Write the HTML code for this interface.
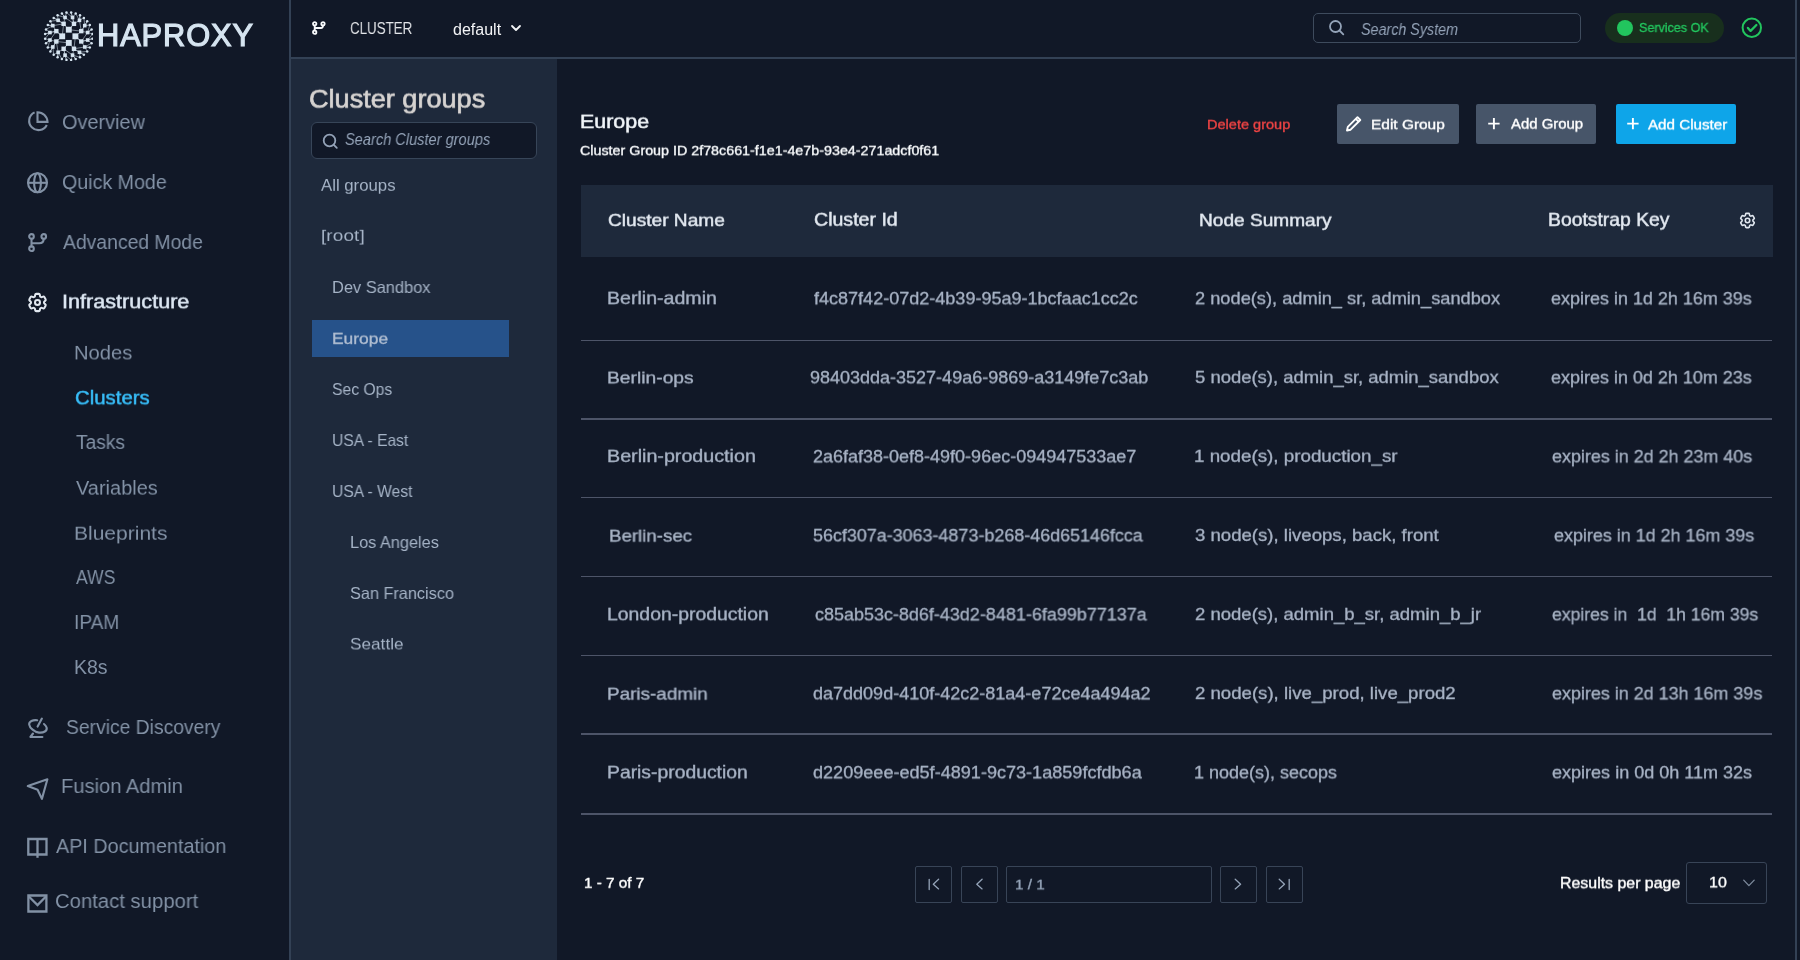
<!DOCTYPE html>
<html><head><meta charset="utf-8"><title>HAProxy Fusion - Clusters</title>
<style>
html,body{margin:0;padding:0;width:1800px;height:960px;overflow:hidden;background:#111827}
body{position:relative;font-family:"Liberation Sans",sans-serif}
.t{position:absolute;white-space:nowrap;line-height:1;will-change:transform;transform-origin:0 0}
.r{position:absolute;display:block}
</style></head><body>
<div class="r" style="left:0px;top:0px;width:1800px;height:960px;background:#111827"></div>
<div class="r" style="left:289px;top:0px;width:2px;height:960px;background:#334155"></div>
<div class="r" style="left:291px;top:57px;width:1504px;height:2px;background:#334155"></div>
<div class="r" style="left:1795px;top:0px;width:2px;height:960px;background:#334155"></div>
<div class="r" style="left:291px;top:59px;width:266px;height:901px;background:#1e293b"></div>
<svg class="r" style="left:43px;top:11px;" width="50" height="50" viewBox="0 0 50 50"><path d="M28.13 1.61L29.55 6.47M28.13 1.61L29.55 6.47M32.71 2.52L29.55 6.47M32.71 2.52L36.47 9.34M37.02 4.31L36.47 9.34M37.02 4.31L36.47 9.34M40.90 6.90L36.47 9.34M40.90 6.90L41.76 14.63M44.20 10.20L41.76 14.63M44.20 10.20L41.76 14.63M46.79 14.08L41.76 14.63M46.79 14.08L44.63 21.55M48.58 18.39L44.63 21.55M48.58 18.39L44.63 21.55M49.49 22.97L44.63 21.55M49.49 22.97L44.63 29.05M49.49 27.63L44.63 29.05M49.49 27.63L44.63 29.05M48.58 32.21L44.63 29.05M48.58 32.21L41.76 35.97M46.79 36.52L41.76 35.97M46.79 36.52L41.76 35.97M44.20 40.40L41.76 35.97M44.20 40.40L36.47 41.26M40.90 43.70L36.47 41.26M40.90 43.70L36.47 41.26M37.02 46.29L36.47 41.26M37.02 46.29L29.55 44.13M32.71 48.08L29.55 44.13M32.71 48.08L29.55 44.13M28.13 48.99L29.55 44.13M28.13 48.99L22.05 44.13M23.47 48.99L22.05 44.13M23.47 48.99L22.05 44.13M18.89 48.08L22.05 44.13M18.89 48.08L15.13 41.26M14.58 46.29L15.13 41.26M14.58 46.29L15.13 41.26M10.70 43.70L15.13 41.26M10.70 43.70L9.84 35.97M7.40 40.40L9.84 35.97M7.40 40.40L9.84 35.97M4.81 36.52L9.84 35.97M4.81 36.52L6.97 29.05M3.02 32.21L6.97 29.05M3.02 32.21L6.97 29.05M2.11 27.63L6.97 29.05M2.11 27.63L6.97 21.55M2.11 22.97L6.97 21.55M2.11 22.97L6.97 21.55M3.02 18.39L6.97 21.55M3.02 18.39L9.84 14.63M4.81 14.08L9.84 14.63M4.81 14.08L9.84 14.63M7.40 10.20L9.84 14.63M7.40 10.20L15.13 9.34M10.70 6.90L15.13 9.34M10.70 6.90L15.13 9.34M14.58 4.31L15.13 9.34M14.58 4.31L22.05 6.47M18.89 2.52L22.05 6.47M18.89 2.52L22.05 6.47M23.47 1.61L22.05 6.47M23.47 1.61L29.55 6.47M29.55 6.47L30.97 12.83M29.55 6.47L30.97 12.83M36.47 9.34L30.97 12.83M36.47 9.34L38.27 20.13M41.76 14.63L38.27 20.13M41.76 14.63L38.27 20.13M44.63 21.55L38.27 20.13M44.63 21.55L38.27 30.47M44.63 29.05L38.27 30.47M44.63 29.05L38.27 30.47M41.76 35.97L38.27 30.47M41.76 35.97L30.97 37.77M36.47 41.26L30.97 37.77M36.47 41.26L30.97 37.77M29.55 44.13L30.97 37.77M29.55 44.13L20.63 37.77M22.05 44.13L20.63 37.77M22.05 44.13L20.63 37.77M15.13 41.26L20.63 37.77M15.13 41.26L13.33 30.47M9.84 35.97L13.33 30.47M9.84 35.97L13.33 30.47M6.97 29.05L13.33 30.47M6.97 29.05L13.33 20.13M6.97 21.55L13.33 20.13M6.97 21.55L13.33 20.13M9.84 14.63L13.33 20.13M9.84 14.63L20.63 12.83M15.13 9.34L20.63 12.83M15.13 9.34L20.63 12.83M22.05 6.47L20.63 12.83M22.05 6.47L30.97 12.83M30.97 12.83L25.80 18.70M30.97 12.83L25.80 18.70M38.27 20.13L25.80 18.70M38.27 20.13L32.40 25.30M38.27 30.47L32.40 25.30M38.27 30.47L32.40 25.30M30.97 37.77L32.40 25.30M30.97 37.77L25.80 31.90M20.63 37.77L25.80 31.90M20.63 37.77L25.80 31.90M13.33 30.47L25.80 31.90M13.33 30.47L19.20 25.30M13.33 20.13L19.20 25.30M13.33 20.13L19.20 25.30M20.63 12.83L19.20 25.30M20.63 12.83L25.80 18.70" stroke="#d6e4f0" stroke-width="0.7" opacity="0.75" fill="none"/><rect x="22.85" y="15.75" width="5.9" height="5.9" fill="#d6e4f0"/><rect x="29.45" y="22.35" width="5.9" height="5.9" fill="#d6e4f0"/><rect x="22.85" y="28.95" width="5.9" height="5.9" fill="#d6e4f0"/><rect x="16.25" y="22.35" width="5.9" height="5.9" fill="#d6e4f0"/><rect x="28.77" y="10.63" width="4.4" height="4.4" fill="#d6e4f0"/><rect x="36.07" y="17.93" width="4.4" height="4.4" fill="#d6e4f0"/><rect x="36.07" y="28.27" width="4.4" height="4.4" fill="#d6e4f0"/><rect x="28.77" y="35.57" width="4.4" height="4.4" fill="#d6e4f0"/><rect x="18.43" y="35.57" width="4.4" height="4.4" fill="#d6e4f0"/><rect x="11.13" y="28.27" width="4.4" height="4.4" fill="#d6e4f0"/><rect x="11.13" y="17.93" width="4.4" height="4.4" fill="#d6e4f0"/><rect x="18.43" y="10.63" width="4.4" height="4.4" fill="#d6e4f0"/><rect x="27.75" y="4.67" width="3.6" height="3.6" fill="#d6e4f0"/><rect x="34.67" y="7.54" width="3.6" height="3.6" fill="#d6e4f0"/><rect x="39.96" y="12.83" width="3.6" height="3.6" fill="#d6e4f0"/><rect x="42.83" y="19.75" width="3.6" height="3.6" fill="#d6e4f0"/><rect x="42.83" y="27.25" width="3.6" height="3.6" fill="#d6e4f0"/><rect x="39.96" y="34.17" width="3.6" height="3.6" fill="#d6e4f0"/><rect x="34.67" y="39.46" width="3.6" height="3.6" fill="#d6e4f0"/><rect x="27.75" y="42.33" width="3.6" height="3.6" fill="#d6e4f0"/><rect x="20.25" y="42.33" width="3.6" height="3.6" fill="#d6e4f0"/><rect x="13.33" y="39.46" width="3.6" height="3.6" fill="#d6e4f0"/><rect x="8.04" y="34.17" width="3.6" height="3.6" fill="#d6e4f0"/><rect x="5.17" y="27.25" width="3.6" height="3.6" fill="#d6e4f0"/><rect x="5.17" y="19.75" width="3.6" height="3.6" fill="#d6e4f0"/><rect x="8.04" y="12.83" width="3.6" height="3.6" fill="#d6e4f0"/><rect x="13.33" y="7.54" width="3.6" height="3.6" fill="#d6e4f0"/><rect x="20.25" y="4.67" width="3.6" height="3.6" fill="#d6e4f0"/><circle cx="28.13" cy="1.61" r="1.25" fill="#d6e4f0"/><circle cx="32.71" cy="2.52" r="1.25" fill="#d6e4f0"/><circle cx="37.02" cy="4.31" r="1.25" fill="#d6e4f0"/><circle cx="40.90" cy="6.90" r="1.25" fill="#d6e4f0"/><circle cx="44.20" cy="10.20" r="1.25" fill="#d6e4f0"/><circle cx="46.79" cy="14.08" r="1.25" fill="#d6e4f0"/><circle cx="48.58" cy="18.39" r="1.25" fill="#d6e4f0"/><circle cx="49.49" cy="22.97" r="1.25" fill="#d6e4f0"/><circle cx="49.49" cy="27.63" r="1.25" fill="#d6e4f0"/><circle cx="48.58" cy="32.21" r="1.25" fill="#d6e4f0"/><circle cx="46.79" cy="36.52" r="1.25" fill="#d6e4f0"/><circle cx="44.20" cy="40.40" r="1.25" fill="#d6e4f0"/><circle cx="40.90" cy="43.70" r="1.25" fill="#d6e4f0"/><circle cx="37.02" cy="46.29" r="1.25" fill="#d6e4f0"/><circle cx="32.71" cy="48.08" r="1.25" fill="#d6e4f0"/><circle cx="28.13" cy="48.99" r="1.25" fill="#d6e4f0"/><circle cx="23.47" cy="48.99" r="1.25" fill="#d6e4f0"/><circle cx="18.89" cy="48.08" r="1.25" fill="#d6e4f0"/><circle cx="14.58" cy="46.29" r="1.25" fill="#d6e4f0"/><circle cx="10.70" cy="43.70" r="1.25" fill="#d6e4f0"/><circle cx="7.40" cy="40.40" r="1.25" fill="#d6e4f0"/><circle cx="4.81" cy="36.52" r="1.25" fill="#d6e4f0"/><circle cx="3.02" cy="32.21" r="1.25" fill="#d6e4f0"/><circle cx="2.11" cy="27.63" r="1.25" fill="#d6e4f0"/><circle cx="2.11" cy="22.97" r="1.25" fill="#d6e4f0"/><circle cx="3.02" cy="18.39" r="1.25" fill="#d6e4f0"/><circle cx="4.81" cy="14.08" r="1.25" fill="#d6e4f0"/><circle cx="7.40" cy="10.20" r="1.25" fill="#d6e4f0"/><circle cx="10.70" cy="6.90" r="1.25" fill="#d6e4f0"/><circle cx="14.58" cy="4.31" r="1.25" fill="#d6e4f0"/><circle cx="18.89" cy="2.52" r="1.25" fill="#d6e4f0"/><circle cx="23.47" cy="1.61" r="1.25" fill="#d6e4f0"/></svg>
<div class="t" style="left:97.04px;top:20.92px;font-size:30.80px;font-weight:400;font-style:normal;color:#d6e4f0;letter-spacing:0.911px;-webkit-text-stroke:1.15px #d6e4f0;">HAPROXY</div>
<svg class="r" style="left:25.6px;top:110px;" width="24" height="24" viewBox="0 0 24 24"><g fill="none" stroke="#8291a5" stroke-width="2.1"><path d="M8.6 2.4A9.3 9.3 0 1 0 20.8 15"/><path d="M11.5 2.2V11.9H21.5A10 10 0 0 0 11.5 2.2Z" stroke-linejoin="miter"/></g></svg>
<div class="t" style="left:61.91px;top:111.88px;font-size:20.50px;font-weight:400;font-style:normal;color:#8291a5;transform:scale(0.9697,1.0000);">Overview</div>
<svg class="r" style="left:26px;top:171px;" width="24" height="24" viewBox="0 0 24 24"><g fill="none" stroke="#8291a5" stroke-width="2.1"><circle cx="11.5" cy="11.8" r="9.5"/><ellipse cx="11.5" cy="11.8" rx="3.4" ry="9.5"/><path d="M2 11.8h19"/></g></svg>
<div class="t" style="left:62.12px;top:171.97px;font-size:20.50px;font-weight:400;font-style:normal;color:#8291a5;transform:scale(0.9579,1.0000);">Quick Mode</div>
<svg class="r" style="left:26px;top:231px;" width="24" height="24" viewBox="0 0 24 24"><g fill="none" stroke="#8291a5" stroke-width="2.1" stroke-linecap="round"><circle cx="5.5" cy="5.4" r="2.3"/><circle cx="17.75" cy="5.4" r="2.3"/><circle cx="5.5" cy="17.7" r="2.3"/><path d="M5.5 7.7V15.4M5.5 12.2H13.2C16 12.2 17.75 10.4 17.75 7.7"/></g></svg>
<div class="t" style="left:62.50px;top:231.77px;font-size:20.50px;font-weight:400;font-style:normal;color:#8291a5;transform:scale(0.9444,1.0000);">Advanced Mode</div>
<svg class="r" style="left:26px;top:291.3px;" width="23" height="23" viewBox="0 0 23 23"><g fill="none" stroke="#e2e8f0" stroke-width="2.1" stroke-linejoin="round" transform="scale(0.9583)"><path d="M9.594 3.94c.09-.542.56-.94 1.11-.94h2.593c.55 0 1.02.398 1.11.94l.213 1.281c.063.374.313.686.645.87.074.04.147.083.22.127.325.196.72.257 1.075.124l1.217-.456a1.125 1.125 0 0 1 1.37.49l1.296 2.247a1.125 1.125 0 0 1-.26 1.431l-1.003.827c-.293.241-.438.613-.43.992a7.723 7.723 0 0 1 0 .255c-.008.378.137.75.43.991l1.004.827c.424.35.534.955.26 1.43l-1.298 2.247a1.125 1.125 0 0 1-1.369.491l-1.217-.456c-.355-.133-.75-.072-1.076.124a6.47 6.47 0 0 1-.22.128c-.331.183-.581.495-.644.869l-.213 1.281c-.09.543-.56.94-1.11.94h-2.594c-.55 0-1.019-.398-1.11-.94l-.213-1.281c-.062-.374-.312-.686-.644-.87a6.52 6.52 0 0 1-.22-.127c-.325-.196-.72-.257-1.076-.124l-1.217.456a1.125 1.125 0 0 1-1.369-.49l-1.297-2.247a1.125 1.125 0 0 1 .26-1.431l1.004-.827c.292-.24.437-.613.43-.991a6.932 6.932 0 0 1 0-.255c.007-.38-.138-.751-.43-.992l-1.004-.827a1.125 1.125 0 0 1-.26-1.43l1.297-2.247a1.125 1.125 0 0 1 1.37-.491l1.216.456c.356.133.751.072 1.076-.124.072-.044.146-.086.22-.128.332-.183.582-.495.644-.869l.214-1.28Z"/><circle cx="12" cy="12" r="2.6"/></g></svg>
<div class="t" style="left:62.25px;top:292.32px;font-size:21.63px;font-weight:400;font-style:normal;color:#dce6f2;transform:scaleY(0.9014);-webkit-text-stroke:0.56px #dce6f2;">Infrastructure</div>
<div class="t" style="left:74.39px;top:342.73px;font-size:20.18px;font-weight:400;font-style:normal;color:#8291a5;transform:scaleY(0.9663);">Nodes</div>
<div class="t" style="left:75.62px;top:432.73px;font-size:19.50px;font-weight:400;font-style:normal;color:#8291a5;transform:scale(0.9846,1.0000);">Tasks</div>
<div class="t" style="left:75.90px;top:477.73px;font-size:19.98px;font-weight:400;font-style:normal;color:#8291a5;transform:scaleY(0.9762);">Variables</div>
<div class="t" style="left:74.32px;top:522.72px;font-size:21.02px;font-weight:400;font-style:normal;color:#8291a5;transform:scale(1.0000,0.9279);">Blueprints</div>
<div class="t" style="left:76.00px;top:567.72px;font-size:19.50px;font-weight:400;font-style:normal;color:#8291a5;transform:scale(0.8995,1.0000);">AWS</div>
<div class="t" style="left:74.28px;top:612.72px;font-size:19.50px;font-weight:400;font-style:normal;color:#8291a5;transform:scale(0.9790,1.0000);">IPAM</div>
<div class="t" style="left:74.46px;top:657.72px;font-size:19.50px;font-weight:400;font-style:normal;color:#8291a5;transform:scale(0.9874,1.0000);">K8s</div>
<div class="t" style="left:75.28px;top:387.73px;font-size:20.36px;font-weight:400;font-style:normal;color:#38bdf8;transform:scaleY(0.9576);-webkit-text-stroke:0.53px #38bdf8;">Clusters</div>
<svg class="r" style="left:26px;top:717px;" width="24" height="24" viewBox="0 0 24 24"><g fill="none" stroke="#8291a5" stroke-width="2.1" stroke-linecap="round" stroke-linejoin="round"><path d="M11.2 3.3C7 2.6 2.8 4.5 3.2 7.6 3.6 10.8 8.6 15.2 13 15.6 17.5 16 21.6 14 20.6 10.5 20.2 9.2 19.3 8 18 7"/><path d="M15.9 1.6L11.6 9.6"/><path d="M7 16.5L4.4 20H16.4"/></g></svg>
<div class="t" style="left:66.33px;top:716.98px;font-size:20.50px;font-weight:400;font-style:normal;color:#8291a5;transform:scale(0.9413,1.0000);">Service Discovery</div>
<svg class="r" style="left:26px;top:778px;" width="24" height="24" viewBox="0 0 24 24"><g fill="none" stroke="#8291a5" stroke-width="2.1" stroke-linejoin="round"><path d="M1.8 8.1L21.4 1.3 15.9 20.9 11.6 11.8Z"/></g></svg>
<div class="t" style="left:61.19px;top:776.48px;font-size:20.50px;font-weight:400;font-style:normal;color:#8291a5;transform:scale(0.9814,1.0000);">Fusion Admin</div>
<svg class="r" style="left:26px;top:836px;" width="24" height="24" viewBox="0 0 24 24"><g fill="none" stroke="#8291a5" stroke-width="2.3"><path d="M2.3 3h18.2v15.5H2.3z"/><path d="M11.5 3.3V21.8"/></g></svg>
<div class="t" style="left:56.30px;top:835.78px;font-size:20.50px;font-weight:400;font-style:normal;color:#8291a5;transform:scale(0.9642,1.0000);">API Documentation</div>
<svg class="r" style="left:26px;top:893px;" width="24" height="24" viewBox="0 0 24 24"><g fill="none" stroke="#8291a5" stroke-width="2.3"><path d="M2.4 2.5h18v16h-18z"/><path d="M2.6 3.2L11.5 12 20.2 3.2"/></g></svg>
<div class="t" style="left:55.29px;top:891.28px;font-size:20.50px;font-weight:400;font-style:normal;color:#8291a5;transform:scale(0.9895,1.0000);">Contact support</div>
<svg class="r" style="left:310px;top:19px;" width="18" height="18" viewBox="0 0 18 18"><g fill="none" stroke="#f8fafc" stroke-width="1.8"><circle cx="4.7" cy="4.8" r="1.7"/><circle cx="13" cy="4.8" r="1.7"/><circle cx="4.7" cy="13.2" r="1.7"/><path d="M4.7 6.5V11.5M4.7 9H11C12.3 9 13 8 13 6.5"/></g></svg>
<div class="t" style="left:350.13px;top:20.38px;font-size:16.50px;font-weight:400;font-style:normal;color:#e5e7eb;transform:scale(0.8090,1.0000);">CLUSTER</div>
<div class="t" style="left:452.66px;top:20.80px;font-size:16.04px;font-weight:400;font-style:normal;color:#f3f4f6;transform:scaleY(0.9975);">default</div>
<svg class="r" style="left:509px;top:22px;" width="14" height="12" viewBox="0 0 14 12"><path d="M3 4l4 4 4-4" fill="none" stroke="#f3f4f6" stroke-width="1.8" stroke-linecap="round" stroke-linejoin="round"/></svg>
<div class="r" style="left:1313px;top:13px;width:268px;height:30px;border:1.6px solid #3e4b5d;border-radius:5px;box-sizing:border-box"></div>
<svg class="r" style="left:1326.9px;top:18px;" width="20" height="20" viewBox="0 0 20 20"><g fill="none" stroke="#94a3b8" stroke-width="1.8" stroke-linecap="round"><circle cx="8.5" cy="8.5" r="5.5"/><path d="M12.5 12.5l3.8 3.8"/></g></svg>
<div class="t" style="left:1360.87px;top:21.35px;font-size:16.30px;font-weight:400;font-style:italic;color:#94a3b8;transform:scale(0.8790,1.0000);">Search System</div>
<div class="r" style="left:1605px;top:13px;width:119px;height:30px;background:#182f1d;border-radius:15px"></div>
<div class="r" style="left:1617px;top:20px;width:16px;height:16px;background:#22c55e;border-radius:50%"></div>
<div class="t" style="left:1639.24px;top:21.25px;font-size:13.00px;font-weight:400;font-style:normal;color:#22c55e;transform:scale(0.9650,1.0000);-webkit-text-stroke:0.34px #22c55e;">Services OK</div>
<svg class="r" style="left:1740px;top:16px;" width="24" height="24" viewBox="0 0 24 24"><g fill="none" stroke="#22c55e" stroke-width="2" stroke-linecap="round" stroke-linejoin="round"><circle cx="11.8" cy="11.8" r="9.2"/><path d="M7.9 11.9L10.6 14.9 16.4 9" stroke-width="2.3"/></g></svg>
<div class="t" style="left:309.44px;top:85.94px;font-size:27.10px;font-weight:400;font-style:normal;color:#d6d3d1;transform:scaleY(0.9404);-webkit-text-stroke:0.70px #d6d3d1;">Cluster groups</div>
<div class="r" style="left:311px;top:122px;width:226px;height:37px;background:#111827;border:1.6px solid #374558;border-radius:6px;box-sizing:border-box"></div>
<svg class="r" style="left:320px;top:131px;" width="20" height="20" viewBox="0 0 20 20"><g fill="none" stroke="#94a3b8" stroke-width="1.8" stroke-linecap="round"><circle cx="9.5" cy="9.5" r="5.8"/><path d="M13.8 13.8l3 3"/></g></svg>
<div class="t" style="left:345.06px;top:130.85px;font-size:17.00px;font-weight:400;font-style:italic;color:#94a3b8;transform:scale(0.8586,1.0000);">Search Cluster groups</div>
<div class="t" style="left:321.40px;top:177.97px;font-size:16.78px;font-weight:400;font-style:normal;color:#a5b3c6;transform:scaleY(0.9833);">All groups</div>
<div class="t" style="left:320.67px;top:227.97px;font-size:18.97px;font-weight:400;font-style:normal;color:#a5b3c6;letter-spacing:0.098px;transform:scaleY(0.8696);">[root]</div>
<div class="t" style="left:331.69px;top:278.78px;font-size:16.50px;font-weight:400;font-style:normal;color:#a5b3c6;transform:scale(0.9939,1.0000);">Dev Sandbox</div>
<div class="r" style="left:312px;top:320.3px;width:197px;height:36.7px;background:#26528a"></div>
<div class="t" style="left:332.21px;top:330.60px;font-size:17.42px;font-weight:400;font-style:normal;color:#afbdd1;transform:scaleY(0.9185);-webkit-text-stroke:0.38px #afbdd1;">Europe</div>
<div class="t" style="left:331.99px;top:380.98px;font-size:16.50px;font-weight:400;font-style:normal;color:#a5b3c6;transform:scale(0.9523,1.0000);">Sec Ops</div>
<div class="t" style="left:331.83px;top:431.98px;font-size:16.50px;font-weight:400;font-style:normal;color:#a5b3c6;transform:scale(0.9450,1.0000);">USA - East</div>
<div class="t" style="left:331.83px;top:482.98px;font-size:16.50px;font-weight:400;font-style:normal;color:#a5b3c6;transform:scale(0.9453,1.0000);">USA - West</div>
<div class="t" style="left:349.50px;top:533.98px;font-size:16.50px;font-weight:400;font-style:normal;color:#a5b3c6;transform:scale(0.9883,1.0000);">Los Angeles</div>
<div class="t" style="left:350.07px;top:584.98px;font-size:16.50px;font-weight:400;font-style:normal;color:#a5b3c6;transform:scale(0.9862,1.0000);">San Francisco</div>
<div class="t" style="left:350.03px;top:635.98px;font-size:17.22px;font-weight:400;font-style:normal;color:#a5b3c6;transform:scaleY(0.9583);">Seattle</div>
<div class="t" style="left:579.78px;top:112.65px;font-size:21.45px;font-weight:400;font-style:normal;color:#f1f5f9;transform:scaleY(0.8857);-webkit-text-stroke:0.56px #f1f5f9;">Europe</div>
<div class="t" style="left:580.28px;top:143.69px;font-size:14.30px;font-weight:400;font-style:normal;color:#f8fafc;transform:scale(1.0000,0.9299);-webkit-text-stroke:0.37px #f8fafc;">Cluster Group ID 2f78c661-f1e1-4e7b-93e4-271adcf0f61</div>
<div class="t" style="left:1207.04px;top:118.12px;font-size:14.56px;font-weight:400;font-style:normal;color:#ef4444;transform:scaleY(0.9273);-webkit-text-stroke:0.38px #ef4444;">Delete group</div>
<div class="r" style="left:1337px;top:104px;width:122px;height:40px;background:#475569;border-radius:2px"></div>
<svg class="r" style="left:1344.3px;top:112.8px;" width="20" height="20" viewBox="0 0 20 20"><g fill="none" stroke="#fff" stroke-width="1.9" stroke-linejoin="round"><path d="M3 17.5l.8-3.6L13.5 4.2l2.8 2.8-9.7 9.7z"/><path d="M11.8 5.9l2.8 2.8"/></g></svg>
<div class="t" style="left:1370.76px;top:117.08px;font-size:15.45px;font-weight:400;font-style:normal;color:#ffffff;transform:scaleY(0.9385);-webkit-text-stroke:0.40px #ffffff;">Edit Group</div>
<div class="r" style="left:1476px;top:104px;width:120px;height:40px;background:#475569;border-radius:2px"></div>
<svg class="r" style="left:1486px;top:116px;" width="16" height="16" viewBox="0 0 16 16"><path d="M7.9 1.9v11.4M2.2 7.6h11.4" stroke="#fff" stroke-width="1.9"/></svg>
<div class="t" style="left:1510.50px;top:117.08px;font-size:14.91px;font-weight:400;font-style:normal;color:#ffffff;transform:scaleY(0.9724);-webkit-text-stroke:0.39px #ffffff;">Add Group</div>
<div class="r" style="left:1616px;top:104px;width:120px;height:40px;background:#0ea5e9;border-radius:2px"></div>
<svg class="r" style="left:1625px;top:116px;" width="16" height="16" viewBox="0 0 16 16"><path d="M7.9 1.9v11.4M2.2 7.6h11.4" stroke="#fff" stroke-width="1.9"/></svg>
<div class="t" style="left:1647.80px;top:117.08px;font-size:15.18px;font-weight:400;font-style:normal;color:#ffffff;transform:scale(1.0000,0.9553);-webkit-text-stroke:0.39px #ffffff;">Add Cluster</div>
<div class="r" style="left:581px;top:185px;width:1192px;height:72px;background:#1e293b"></div>
<div class="t" style="left:607.74px;top:211.10px;font-size:19.12px;font-weight:400;font-style:normal;color:#e2e8f0;transform:scaleY(0.9415);-webkit-text-stroke:0.50px #e2e8f0;">Cluster Name</div>
<div class="t" style="left:814.02px;top:211.10px;font-size:19.57px;font-weight:400;font-style:normal;color:#e2e8f0;transform:scale(1.0000,0.9199);-webkit-text-stroke:0.51px #e2e8f0;">Cluster Id</div>
<div class="t" style="left:1199.47px;top:211.10px;font-size:19.08px;font-weight:400;font-style:normal;color:#e2e8f0;transform:scale(1.0000,0.9433);-webkit-text-stroke:0.50px #e2e8f0;">Node Summary</div>
<div class="t" style="left:1548.15px;top:211.10px;font-size:19.35px;font-weight:400;font-style:normal;color:#e2e8f0;transform:scale(1.0000,0.9300);-webkit-text-stroke:0.50px #e2e8f0;">Bootstrap Key</div>
<svg class="r" style="left:1737.8px;top:210.5px;" width="19" height="19" viewBox="0 0 19 19"><g fill="none" stroke="#e2e8f0" stroke-width="2" stroke-linejoin="round" transform="scale(0.7917)"><path d="M9.594 3.94c.09-.542.56-.94 1.11-.94h2.593c.55 0 1.02.398 1.11.94l.213 1.281c.063.374.313.686.645.87.074.04.147.083.22.127.325.196.72.257 1.075.124l1.217-.456a1.125 1.125 0 0 1 1.37.49l1.296 2.247a1.125 1.125 0 0 1-.26 1.431l-1.003.827c-.293.241-.438.613-.43.992a7.723 7.723 0 0 1 0 .255c-.008.378.137.75.43.991l1.004.827c.424.35.534.955.26 1.43l-1.298 2.247a1.125 1.125 0 0 1-1.369.491l-1.217-.456c-.355-.133-.75-.072-1.076.124a6.47 6.47 0 0 1-.22.128c-.331.183-.581.495-.644.869l-.213 1.281c-.09.543-.56.94-1.11.94h-2.594c-.55 0-1.019-.398-1.11-.94l-.213-1.281c-.062-.374-.312-.686-.644-.87a6.52 6.52 0 0 1-.22-.127c-.325-.196-.72-.257-1.076-.124l-1.217.456a1.125 1.125 0 0 1-1.369-.49l-1.297-2.247a1.125 1.125 0 0 1 .26-1.431l1.004-.827c.292-.24.437-.613.43-.991a6.932 6.932 0 0 1 0-.255c.007-.38-.138-.751-.43-.992l-1.004-.827a1.125 1.125 0 0 1-.26-1.43l1.297-2.247a1.125 1.125 0 0 1 1.37-.491l1.216.456c.356.133.751.072 1.076-.124.072-.044.146-.086.22-.128.332-.183.582-.495.644-.869l.214-1.28Z"/><circle cx="12" cy="12" r="2.8"/></g></svg>
<div class="t" style="left:606.63px;top:290.10px;font-size:19.58px;font-weight:400;font-style:normal;color:#a7b2c4;transform:scale(1.0000,0.8831);-webkit-text-stroke:0.43px #a7b2c4;">Berlin-admin</div>
<div class="t" style="left:813.93px;top:290.11px;font-size:18.05px;font-weight:400;font-style:normal;color:#a7b2c4;transform:scaleY(0.9572);-webkit-text-stroke:0.36px #a7b2c4;">f4c87f42-07d2-4b39-95a9-1bcfaac1cc2c</div>
<div class="t" style="left:1194.59px;top:290.11px;font-size:18.24px;font-weight:400;font-style:normal;color:#a7b2c4;transform:scaleY(0.9476);-webkit-text-stroke:0.36px #a7b2c4;">2 node(s), admin_ sr, admin_sandbox</div>
<div class="t" style="left:1551.48px;top:290.11px;font-size:18.00px;font-weight:400;font-style:normal;color:#a7b2c4;transform:scale(0.9985,0.9600);-webkit-text-stroke:0.36px #a7b2c4;white-space:pre;">expires in 1d 2h 16m 39s</div>
<div class="t" style="left:606.66px;top:369.13px;font-size:19.25px;font-weight:400;font-style:normal;color:#a7b2c4;transform:scaleY(0.8983);-webkit-text-stroke:0.42px #a7b2c4;">Berlin-ops</div>
<div class="t" style="left:809.99px;top:369.14px;font-size:18.01px;font-weight:400;font-style:normal;color:#a7b2c4;transform:scaleY(0.9594);-webkit-text-stroke:0.36px #a7b2c4;">98403dda-3527-49a6-9869-a3149fe7c3ab</div>
<div class="t" style="left:1194.76px;top:369.14px;font-size:18.47px;font-weight:400;font-style:normal;color:#a7b2c4;transform:scale(1.0000,0.9356);-webkit-text-stroke:0.37px #a7b2c4;">5 node(s), admin_sr, admin_sandbox</div>
<div class="t" style="left:1551.48px;top:369.14px;font-size:18.00px;font-weight:400;font-style:normal;color:#a7b2c4;transform:scale(0.9985,0.9600);-webkit-text-stroke:0.36px #a7b2c4;white-space:pre;">expires in 0d 2h 10m 23s</div>
<div class="t" style="left:606.72px;top:448.16px;font-size:19.69px;font-weight:400;font-style:normal;color:#a7b2c4;transform:scaleY(0.8781);-webkit-text-stroke:0.43px #a7b2c4;">Berlin-production</div>
<div class="t" style="left:813.10px;top:448.17px;font-size:18.01px;font-weight:400;font-style:normal;color:#a7b2c4;transform:scale(1.0000,0.9593);-webkit-text-stroke:0.36px #a7b2c4;">2a6faf38-0ef8-49f0-96ec-094947533ae7</div>
<div class="t" style="left:1194.09px;top:448.17px;font-size:18.80px;font-weight:400;font-style:normal;color:#a7b2c4;transform:scaleY(0.9192);-webkit-text-stroke:0.38px #a7b2c4;">1 node(s), production_sr</div>
<div class="t" style="left:1551.58px;top:448.17px;font-size:18.00px;font-weight:400;font-style:normal;color:#a7b2c4;transform:scale(0.9960,0.9600);-webkit-text-stroke:0.36px #a7b2c4;white-space:pre;">expires in 2d 2h 23m 40s</div>
<div class="t" style="left:608.51px;top:527.19px;font-size:19.00px;font-weight:400;font-style:normal;color:#a7b2c4;transform:scale(0.9823,0.9100);-webkit-text-stroke:0.42px #a7b2c4;">Berlin-sec</div>
<div class="t" style="left:812.58px;top:527.20px;font-size:18.00px;font-weight:400;font-style:normal;color:#a7b2c4;transform:scale(0.9953,0.9600);-webkit-text-stroke:0.36px #a7b2c4;">56cf307a-3063-4873-b268-46d65146fcca</div>
<div class="t" style="left:1194.76px;top:527.20px;font-size:18.59px;font-weight:400;font-style:normal;color:#a7b2c4;transform:scale(1.0000,0.9294);-webkit-text-stroke:0.37px #a7b2c4;">3 node(s), liveops, back, front</div>
<div class="t" style="left:1553.58px;top:527.20px;font-size:18.00px;font-weight:400;font-style:normal;color:#a7b2c4;transform:scale(0.9960,0.9600);-webkit-text-stroke:0.36px #a7b2c4;white-space:pre;">expires in 1d 2h 16m 39s</div>
<div class="t" style="left:606.75px;top:606.22px;font-size:19.40px;font-weight:400;font-style:normal;color:#a7b2c4;transform:scaleY(0.8911);-webkit-text-stroke:0.43px #a7b2c4;">London-production</div>
<div class="t" style="left:815.28px;top:606.23px;font-size:18.00px;font-weight:400;font-style:normal;color:#a7b2c4;transform:scale(0.9983,0.9600);-webkit-text-stroke:0.36px #a7b2c4;">c85ab53c-8d6f-43d2-8481-6fa99b77137a</div>
<div class="t" style="left:1194.57px;top:606.23px;font-size:18.52px;font-weight:400;font-style:normal;color:#a7b2c4;transform:scaleY(0.9328);-webkit-text-stroke:0.37px #a7b2c4;">2 node(s), admin_b_sr, admin_b_jr</div>
<div class="t" style="left:1551.60px;top:606.23px;font-size:18.00px;font-weight:400;font-style:normal;color:#a7b2c4;transform:scale(0.9772,0.9600);-webkit-text-stroke:0.36px #a7b2c4;white-space:pre;">expires in  1d  1h 16m 39s</div>
<div class="t" style="left:606.79px;top:685.25px;font-size:19.00px;font-weight:400;font-style:normal;color:#a7b2c4;transform:scale(0.9938,0.9100);-webkit-text-stroke:0.42px #a7b2c4;">Paris-admin</div>
<div class="t" style="left:813.28px;top:685.26px;font-size:18.02px;font-weight:400;font-style:normal;color:#a7b2c4;transform:scaleY(0.9591);-webkit-text-stroke:0.36px #a7b2c4;">da7dd09d-410f-42c2-81a4-e72ce4a494a2</div>
<div class="t" style="left:1194.57px;top:685.26px;font-size:18.62px;font-weight:400;font-style:normal;color:#a7b2c4;transform:scaleY(0.9280);-webkit-text-stroke:0.37px #a7b2c4;">2 node(s), live_prod, live_prod2</div>
<div class="t" style="left:1551.58px;top:685.26px;font-size:18.00px;font-weight:400;font-style:normal;color:#a7b2c4;transform:scale(0.9962,0.9600);-webkit-text-stroke:0.36px #a7b2c4;white-space:pre;">expires in 2d 13h 16m 39s</div>
<div class="t" style="left:606.75px;top:764.28px;font-size:19.34px;font-weight:400;font-style:normal;color:#a7b2c4;transform:scale(1.0000,0.8939);-webkit-text-stroke:0.43px #a7b2c4;">Paris-production</div>
<div class="t" style="left:813.28px;top:764.29px;font-size:18.08px;font-weight:400;font-style:normal;color:#a7b2c4;transform:scaleY(0.9557);-webkit-text-stroke:0.36px #a7b2c4;">d2209eee-ed5f-4891-9c73-1a859fcfdb6a</div>
<div class="t" style="left:1194.15px;top:764.29px;font-size:18.00px;font-weight:400;font-style:normal;color:#a7b2c4;transform:scale(0.9991,0.9600);-webkit-text-stroke:0.36px #a7b2c4;">1 node(s), secops</div>
<div class="t" style="left:1551.58px;top:764.29px;font-size:18.05px;font-weight:400;font-style:normal;color:#a7b2c4;transform:scale(1.0000,0.9573);-webkit-text-stroke:0.36px #a7b2c4;white-space:pre;">expires in 0d 0h 11m 32s</div>
<div class="r" style="left:581px;top:339.5px;width:1191px;height:1.5px;background:#4d5468"></div>
<div class="r" style="left:581px;top:418.0px;width:1191px;height:1.5px;background:#4d5468"></div>
<div class="r" style="left:581px;top:496.5px;width:1191px;height:1.5px;background:#4d5468"></div>
<div class="r" style="left:581px;top:575.5px;width:1191px;height:1.5px;background:#4d5468"></div>
<div class="r" style="left:581px;top:654.5px;width:1191px;height:1.5px;background:#4d5468"></div>
<div class="r" style="left:581px;top:733.0px;width:1191px;height:1.5px;background:#4d5468"></div>
<div class="r" style="left:581px;top:813.0px;width:1191px;height:1.5px;background:#4d5468"></div>
<div class="t" style="left:583.85px;top:875.25px;font-size:15.29px;font-weight:400;font-style:normal;color:#ffffff;transform:scale(1.0000,0.9812);-webkit-text-stroke:0.40px #ffffff;">1 - 7 of 7</div>
<div class="r" style="left:915px;top:866px;width:37px;height:37px;border:1.2px solid #384457;border-radius:2px;box-sizing:border-box"></div>
<div class="r" style="left:961px;top:866px;width:37px;height:37px;border:1.2px solid #384457;border-radius:2px;box-sizing:border-box"></div>
<div class="r" style="left:1005.5px;top:866px;width:206px;height:37px;border:1.2px solid #384457;border-radius:2px;box-sizing:border-box"></div>
<div class="r" style="left:1220px;top:866px;width:37px;height:37px;border:1.2px solid #384457;border-radius:2px;box-sizing:border-box"></div>
<div class="r" style="left:1265.5px;top:866px;width:37px;height:37px;border:1.2px solid #384457;border-radius:2px;box-sizing:border-box"></div>
<svg class="r" style="left:925px;top:876px;" width="16" height="16" viewBox="0 0 16 16"><g fill="none" stroke="#94a3b8" stroke-width="1.3" stroke-linecap="round" stroke-linejoin="round"><path d="M4.2 3.3V13.6M13.6 3.3L8.3 8.25 13.6 12.9"/></g></svg>
<svg class="r" style="left:971px;top:876px;" width="16" height="16" viewBox="0 0 16 16"><g fill="none" stroke="#94a3b8" stroke-width="1.3" stroke-linecap="round" stroke-linejoin="round"><path d="M11.1 3.3L5.8 8.25 11.1 12.9"/></g></svg>
<svg class="r" style="left:1230px;top:876px;" width="16" height="16" viewBox="0 0 16 16"><g fill="none" stroke="#94a3b8" stroke-width="1.3" stroke-linecap="round" stroke-linejoin="round"><path d="M5.2 3.3L10.6 8.25 5.2 12.9"/></g></svg>
<svg class="r" style="left:1276px;top:876px;" width="16" height="16" viewBox="0 0 16 16"><g fill="none" stroke="#94a3b8" stroke-width="1.3" stroke-linecap="round" stroke-linejoin="round"><path d="M3.2 3.3L8.5 8.25 3.2 12.9M13.2 3.3V13.6"/></g></svg>
<div class="t" style="left:1014.65px;top:876.67px;font-size:15.34px;font-weight:400;font-style:normal;color:#94a3b8;transform:scale(1.0000,0.9451);-webkit-text-stroke:0.40px #94a3b8;">1 / 1</div>
<div class="t" style="left:1559.83px;top:876.25px;font-size:15.92px;font-weight:400;font-style:normal;color:#ffffff;transform:scale(1.0000,0.9419);-webkit-text-stroke:0.41px #ffffff;">Results per page</div>
<div class="r" style="left:1685.5px;top:862px;width:81px;height:42px;border:1.2px solid #384457;border-radius:3px;box-sizing:border-box"></div>
<div class="t" style="left:1708.80px;top:876.30px;font-size:16.00px;font-weight:400;font-style:normal;color:#ffffff;transform:scaleY(0.8750);-webkit-text-stroke:0.35px #ffffff;">10</div>
<svg class="r" style="left:1741px;top:876px;" width="16" height="14" viewBox="0 0 16 14"><path d="M2.7 4.1L7.9 9.6 13.2 4.1" fill="none" stroke="#7d8a9c" stroke-width="1.3" stroke-linecap="round" stroke-linejoin="round"/></svg>
</body></html>
